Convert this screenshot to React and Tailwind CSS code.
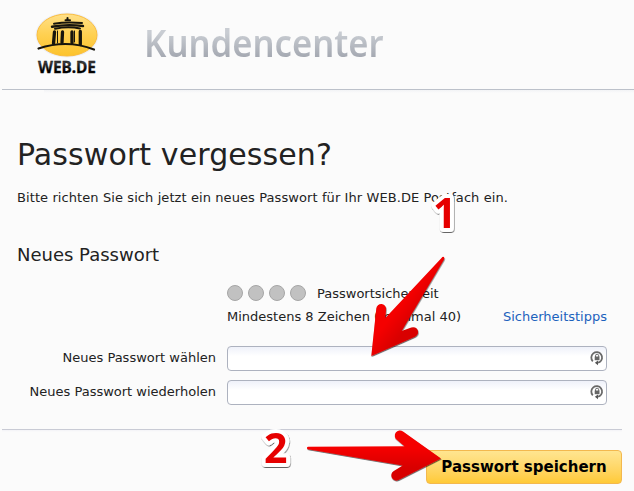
import React from 'react';

const WebDeLogo = () => (
  <svg width="66" height="66" viewBox="0 0 66 66" className="mt-[11px] ml-[34px] shrink-0 overflow-visible">
    <defs>
      <linearGradient id="sun" x1="0" y1="0" x2="0" y2="1">
        <stop offset="0" stopColor="#ffe088" />
        <stop offset="0.5" stopColor="#ffd050" />
        <stop offset="1" stopColor="#fcc32c" />
      </linearGradient>
      <linearGradient id="wordmark" x1="0" y1="0" x2="0" y2="1">
        <stop offset="0.3" stopColor="#3a3a3a" />
        <stop offset="0.65" stopColor="#000" />
      </linearGradient>
    </defs>
    <ellipse cx="33" cy="24" rx="31.5" ry="22.5" fill="#eef0f5" />
    <ellipse cx="33" cy="24" rx="30" ry="21" fill="url(#sun)" stroke="#fbbd3d" />
    <g fill="none" stroke="#17150d" strokeLinecap="round" strokeLinejoin="round">
      <path d="M4.500 37.500Q33 28 60 38.500" strokeWidth="2.200" />
      <path d="M20 12.800Q32 10.500 48 12" strokeWidth="2" />
      <path d="M18 15.800Q32 13 49 15" strokeWidth="2.400" />
      <path d="M21 17.800Q34 15 46 17.500" strokeWidth="2" />
      <path d="M31.500 9.300h4.500M33.500 9v-2" strokeWidth="2" />
      <path d="M20.500 21l-1 11.500M28.500 21l-.5 10.500M38 21v10.500M46.300 20.500v13" strokeWidth="3.300" />
      <path d="M23.500 20v12M40.500 20v11" strokeWidth="1" />
    </g>
    <text x="4" y="62" textLength="58" lengthAdjust="spacingAndGlyphs" fill="url(#wordmark)" stroke="#111" strokeWidth="0.300" className="font-['Noto_Sans',sans-serif] text-[16px] font-bold">WEB.DE</text>
  </svg>
);

const LockIcon = () => (
  <svg width="14" height="16" viewBox="0 0 14 16" fill="none" className="mr-[2px]">
    <path d="M2.800 11.300A5.400 5.400 0 1 1 9.500 12.200L6.500 13" stroke="#696969" strokeWidth="1.800" />
    <path d="M8 10.400v4.800L4.900 12.800z" fill="#555" />
    <path d="M5.500 7V5.800a1.600 1.600 0 0 1 3.200 0V7" stroke="#696969" />
    <path d="M4.700 6.500h4.800v3.700H4.700z" fill="#666" />
  </svg>
);

const PasswordRow = ({ id, label }) => (
  <div className="flex h-[25px] items-center">
    <label htmlFor={id} className="w-[216px] pb-[2px] text-right text-[13px] leading-[23px]">{label}</label>
    <div className="ml-[11px] flex h-[25px] w-[380px] items-center rounded-[4px] border border-[#adb2bf] bg-white bg-linear-to-b from-[#eff1fa] to-white to-40% pb-[2px]">
      <input id={id} type="password" className="h-full min-w-0 flex-1 bg-transparent px-2 outline-none" />
      <LockIcon />
    </div>
  </div>
);

const Arrows = () => (
  <svg width="634" height="491" viewBox="0 0 634 491" className="pointer-events-none absolute top-0 left-0">
    <defs>
      <linearGradient id="arrowOne" gradientUnits="userSpaceOnUse" x1="390" y1="318" x2="405" y2="330">
        <stop offset="0" stopColor="#f50000" />
        <stop offset="1" stopColor="#d90000" />
      </linearGradient>
      <linearGradient id="arrowTwo" x1="0" y1="0" x2="0" y2="1">
        <stop offset="0.35" stopColor="#f50000" />
        <stop offset="0.75" stopColor="#d80000" />
      </linearGradient>
      <filter id="shade" x="-10%" y="-10%" width="120%" height="120%">
        <feDropShadow dx="0.500" dy="1" stdDeviation="0.600" floodColor="#000" floodOpacity="0.600" />
      </filter>
    </defs>
    <g filter="url(#shade)">
      <path d="M371.300 356L376.300 308.500A4.900 4.900 0 0 1 386.100 309.200L385.300 318L441.500 258C443 255.700 445 257 444 259.500L401.700 331L411.300 327.500A4.900 4.900 0 0 1 415 336.700Z" fill="url(#arrowOne)" />
      <path d="M441 458.500L403 431.500A5.100 5.100 0 0 0 396.900 439.800L404.500 446.300L308 446.700C306.500 447 306.500 449 308 449.300L402.700 465.500L393.800 470.900A5.100 5.100 0 0 0 399 479.700Z" fill="url(#arrowTwo)" />
    </g>
    <g filter="url(#shade)" fill="#e60000" stroke="#fff" strokeWidth="8" strokeLinejoin="round" paintOrder="stroke" className="font-['Open_Sans',sans-serif] text-[41px] font-bold">
      <text x="433" y="228">1</text>
      <text x="264" y="463">2</text>
    </g>
  </svg>
);

const App = () => {
  return (
    <div className="relative h-[491px] w-[634px] overflow-hidden bg-[#fbfbfb] font-['DejaVu_Sans',sans-serif] text-[13px] text-[#222]">
      {/* Header */}
      <header className="ml-[2px] flex h-[90px] border-b border-[#bcc1ca]">
        <div className="-ml-[2px]"><WebDeLogo /></div>
        <span className="mt-[14px] ml-[44px] origin-left scale-x-[0.911] bg-linear-to-b from-[#c9cdd3] from-25% to-[#8d919b] to-80% bg-clip-text font-['Noto_Sans',sans-serif] text-[38px] leading-[56px] font-semibold text-transparent">Kundencenter</span>
      </header>
      <div className="ml-[44px] h-[3px] bg-linear-to-b from-[#f2f3f6] to-[#fbfbfb]" />

      <main>
        <h1 className="mt-[42px] ml-[17px] text-[30px] leading-[40px] tracking-[0.1px]">Passwort vergessen?</h1>
        <p className="mt-[13px] ml-[17px] text-[13px] leading-[20px] tracking-[0.09px] whitespace-nowrap">
          Bitte richten Sie sich jetzt ein neues Passwort für Ihr WEB.DE Postfach ein.
        </p>
        <h2 className="mt-[34px] ml-[17px] text-[18px] leading-[26px]">Neues Passwort</h2>

        {/* Strength */}
        <div className="mt-[15px] ml-[227px] flex h-[20px] items-center">
          <div className="flex gap-[5px]">
            {[1, 2, 3, 4].map((dot) => (
              <span key={dot} className="size-[16px] rounded-full border border-[#a6a6a6] bg-[#c1c1c1]" />
            ))}
          </div>
          <span className="ml-[11px] pt-[2px] leading-[20px]">Passwortsicherheit</span>
        </div>
        <div className="mt-[4px] mr-[27px] ml-[227px] flex justify-between leading-[20px]">
          <span>Mindestens 8 Zeichen (maximal 40)</span>
          <a href="#tipps" className="text-[#1c62bd]">Sicherheitstipps</a>
        </div>

        <form className="mt-[19px] flex flex-col gap-[9px]">
          <PasswordRow id="password" label="Neues Passwort wählen" />
          <PasswordRow id="repeat" label="Neues Passwort wiederholen" />
          <div className="mt-[15px] mr-[12px] ml-[2px] h-[3px] border-t border-[#c9cbd5] bg-linear-to-b from-[#f3f3f7] to-[#fbfbfb]" />
          <button type="button" className="mt-[9px] mr-[12px] h-[34px] w-[196px] self-end rounded-[4px] border border-[#f3b84e] bg-linear-to-b from-[#ffe590] to-[#ffca35] text-[15px] font-bold text-black">
            Passwort speichern
          </button>
        </form>
      </main>

      <Arrows />
    </div>
  );
};

export default App;
